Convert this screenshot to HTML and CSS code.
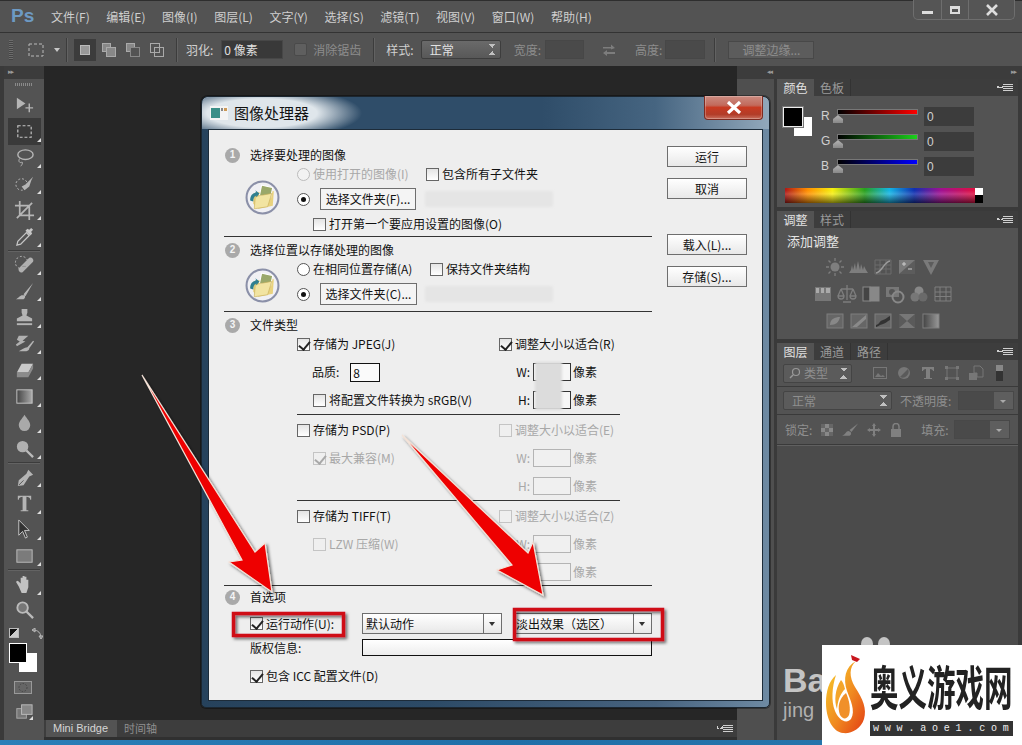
FILE: index.html
```html
<!DOCTYPE html>
<html lang="zh">
<head>
<meta charset="utf-8">
<title>图像处理器</title>
<link rel="stylesheet" href="styles.css">
</head>
<body>
<div class="app">
  <header class="menubar">
    <span class="ps">Ps</span>
    <nav class="menu"><span>文件(F)</span><span>编辑(E)</span><span>图像(I)</span><span>图层(L)</span><span>文字(Y)</span><span>选择(S)</span><span>滤镜(T)</span><span>视图(V)</span><span>窗口(W)</span><span>帮助(H)</span></nav>
    <div class="winbtns">
      <span class="wb wb-min"><i></i></span><span class="wb wb-max"><i></i></span><span class="wb wb-close">
        <svg width="14" height="12" viewBox="0 0 14 12"><path d="M2 1l10 10M12 1L2 11" stroke="#ddd" stroke-width="2.6"/></svg></span>
    </div>
  </header>

  <div class="optbar">
    <span class="grip"></span>
    <svg class="o-marq" width="16" height="14" viewBox="0 0 16 14"><rect x="1" y="1" width="14" height="12" fill="none" stroke="#bbb" stroke-dasharray="3 2"/></svg>
    <span class="o-caret"></span>
    <span class="o-sep s1"></span>
    <span class="o-mode on"><svg width="12" height="12"><rect x="1.5" y="1.5" width="9" height="9" fill="#999" stroke="#bbb"/></svg></span>
    <span class="o-mode"><svg width="14" height="14"><rect x=".5" y=".5" width="8" height="8" fill="#888" stroke="#aaa"/><rect x="4.5" y="4.5" width="9" height="9" fill="#888" stroke="#aaa"/></svg></span>
    <span class="o-mode"><svg width="14" height="14"><rect x=".5" y=".5" width="8" height="8" fill="#888" stroke="#aaa"/><rect x="4.5" y="4.5" width="9" height="9" fill="#535353" stroke="#888"/></svg></span>
    <span class="o-mode"><svg width="14" height="14"><rect x=".5" y=".5" width="9" height="9" fill="none" stroke="#aaa"/><rect x="4.5" y="4.5" width="9" height="9" fill="none" stroke="#aaa"/></svg></span>
    <span class="o-sep s2"></span>
    <span class="o-label l1">羽化:</span>
    <span class="o-input feather">0 像素</span>
    <span class="o-check"></span>
    <span class="o-label dim">消除锯齿</span>
    <span class="o-sep s3"></span>
    <span class="o-label l2">样式:</span>
    <span class="o-select">正常<i class="updown"></i></span>
    <span class="o-label dim l3">宽度:</span>
    <span class="o-input w1"></span>
    <svg class="o-swap" width="14" height="14" viewBox="0 0 14 14"><path d="M1 4h8V1.5L13 5 9 6.5V5.500H1zM13 9H5V7L1 10l4 3v-2h8z" fill="#7d7d7d"/></svg>
    <span class="o-label dim l4">高度:</span>
    <span class="o-input w2"></span>
    <span class="o-sep s4"></span>
    <span class="o-btn">调整边缘...</span>
  </div>

  <main class="work">
    <aside class="toolcol">
      <div class="strip"><span class="arrows">▸▸</span></div>
      <div class="toolgrip"></div>
      <div class="tools">
        <div class="tool nocorner"><svg viewBox="0 0 22 22"><path d="M3 3l9 6-9 6z" fill="#b5b5b5"/><path d="M16 9v9M12 13.500h8" stroke="#b5b5b5" stroke-width="1.500"/></svg></div>
        <div class="tool active"><svg viewBox="0 0 22 22"><rect x="4" y="5" width="14" height="12" fill="none" stroke="#c8c8c8" stroke-width="1.200" stroke-dasharray="3 2"/></svg></div>
        <div class="tool"><svg viewBox="0 0 22 22"><ellipse cx="12" cy="8" rx="8" ry="5" fill="none" stroke="#b5b5b5" stroke-width="1.500"/><path d="M6 12c-2 3 0 5 2 4s0 4-1 4" fill="none" stroke="#b5b5b5"/></svg></div>
        <div class="tool"><svg viewBox="0 0 22 22"><circle cx="8" cy="11" r="6" fill="none" stroke="#bbb" stroke-dasharray="2 2"/><path d="M20 3l-8 8-4 2 3 4 5-4 2-6z" fill="#b5b5b5"/></svg></div>
        <div class="tool"><svg viewBox="0 0 22 22"><path d="M6 1v15h15M1 6h15v15M3 19L19 3" fill="none" stroke="#b5b5b5" stroke-width="1.800"/></svg></div>
        <div class="tool"><svg viewBox="0 0 22 22"><path d="M3 20l1-4 9-9 3 3-9 9z" fill="none" stroke="#c5c5c5" stroke-width="1.300"/><path d="M12 5l5 5 2-2-1-2 2-2-2-2-2 2-2-1z" fill="#c5c5c5"/></svg></div>
        <div class="tool-div"></div>
        <div class="tool"><svg viewBox="0 0 22 22"><circle cx="8" cy="9" r="6.500" fill="none" stroke="#bbb" stroke-dasharray="2 2"/><path d="M5 15L16 4a3 3 0 0 1 4 4L9 19a3 3 0 0 1-4-4z" fill="#b0b0b0"/><path d="M9 13l4 0" stroke="#777" stroke-dasharray="1 1"/></svg></div>
        <div class="tool"><svg viewBox="0 0 22 22"><path d="M20 2L10 14l2 2zM9 15c-3 0-4 3-7 4h8c2-1 2-3 1-4z" fill="#b5b5b5"/></svg></div>
        <div class="tool"><svg viewBox="0 0 22 22"><path d="M8 2h6v4l-1 3 6 3v3H3v-3l6-3-1-3z" fill="#b5b5b5"/><path d="M3 18h16" stroke="#b5b5b5" stroke-width="2"/></svg></div>
        <div class="tool"><svg viewBox="0 0 22 22"><path d="M5 3h10l-6 5 3 1-9 5-1-2 4-3-3-2z" fill="#b0b0b0"/><path d="M20 8l-6 7c-3 0-6 3-9 4h8c3-1 3-2 3-3l5-7z" fill="#b5b5b5"/></svg></div>
        <div class="tool"><svg viewBox="0 0 22 22"><path d="M8 4h12l-5 9H3z" fill="#c9c9c9"/><path d="M3 13h12v5H3zM15 13l5-9v5l-5 9z" fill="#8b8b8b"/></svg></div>
        <div class="tool"><svg viewBox="0 0 22 22"><defs><linearGradient id="gr"><stop offset="0" stop-color="#444"/><stop offset="1" stop-color="#aaa"/></linearGradient></defs><rect x="3" y="4" width="16" height="14" fill="url(#gr)" stroke="#c5c5c5"/></svg></div>
        <div class="tool"><svg viewBox="0 0 22 22"><path d="M11 3c3 5 6 7 6 11a6 6 0 0 1-12 0c0-4 3-6 6-11z" fill="#a9a9a9"/></svg></div>
        <div class="tool"><svg viewBox="0 0 22 22"><circle cx="9" cy="8" r="6" fill="#b0b0b0"/><path d="M13 12l7 7" stroke="#bbb" stroke-width="2.400"/></svg></div>
        <div class="tool-div"></div>
        <div class="tool"><svg viewBox="0 0 22 22"><path d="M15 3l5 5-4 2-6 9-6 1 1-6 8-7z" fill="#b5b5b5"/><path d="M5 19l5-5" stroke="#535353"/></svg></div>
        <div class="tool"><svg viewBox="0 0 22 22"><path d="M4 3h14v4h-1c0-2-2-3-4-3v14h2v1H7v-1h2V4C7 4 5 5 5 7H4z" fill="#b5b5b5"/></svg></div>
        <div class="tool"><svg viewBox="0 0 22 22"><path d="M5 1l11 11h-5l3 7-2 1-3-7-4 4z" fill="#333" stroke="#c5c5c5"/></svg></div>
        <div class="tool"><svg viewBox="0 0 22 22"><rect x="3" y="4" width="16" height="13" fill="#7b7b7b" stroke="#bbb"/></svg></div>
        <div class="tool-div"></div>
        <div class="tool"><svg viewBox="0 0 22 22"><path d="M5 13L2 8l2-1 3 3V4h2v5-7h2v7-6h2v7-4h2v8l-2 6H8z" fill="#c2c2c2"/></svg></div>
        <div class="tool nocorner"><svg viewBox="0 0 22 22"><circle cx="9" cy="8" r="5.500" fill="#777" stroke="#bbb" stroke-width="2"/><path d="M13 12l7 7" stroke="#bbb" stroke-width="2.400"/></svg></div>
      </div>
      <div class="colorctl">
        <div class="ctl-top">
          <span class="mini"></span>
          <svg width="12" height="12" viewBox="0 0 12 12"><path d="M2 2c5 0 8 3 8 8M1 2l3-2v4zM10 11L8 8h4z" fill="none" stroke="#bbb" stroke-width="1"/></svg>
        </div>
        <div class="bigswatch"><span class="fgc"></span><span class="bgc"></span></div>
        <svg class="qmask" width="18" height="13" viewBox="0 0 18 13"><rect x=".5" y=".5" width="17" height="12" fill="#666" stroke="#999"/><circle cx="9" cy="6.500" r="4" fill="none" stroke="#444" stroke-dasharray="1.500 1.500"/></svg>
        <div class="tool screen"><svg viewBox="0 0 22 22"><rect x="4" y="8" width="10" height="10" fill="#777" stroke="#aaa"/><rect x="9" y="4" width="11" height="10" fill="#888" stroke="#bbb"/></svg></div>
      </div>
    </aside>

    <section class="center">
      <div class="canvas"></div>
      <div class="bottom">
        <span class="btab on">Mini Bridge</span><span class="btab">时间轴</span>
        <span class="pmenu bm"></span>
      </div>
    </section>

    <aside class="dock">
      <div class="strip dockstrip"><span class="arrows">◂◂</span><span class="arrows">▸▸</span></div>
      <div class="dockbody">
        <div class="iconcol"></div>
        <div class="panels">
          <section class="panel">
            <div class="tabs"><span class="tab on">颜色</span><span class="tab">色板</span><span class="pmenu"></span></div>
            <div class="pbody color">
              <div class="colortop">
                <div class="swatch"><span class="s-fg"></span><span class="s-bg"></span></div>
                <div class="sliders">
                  <div class="srow"><span class="slabel">R</span><span class="slider red"></span><span class="pinput">0</span></div>
                  <div class="srow"><span class="slabel">G</span><span class="slider green"></span><span class="pinput">0</span></div>
                  <div class="srow"><span class="slabel">B</span><span class="slider blue"></span><span class="pinput">0</span></div>
                </div>
              </div>
              <div class="spectrum"><div class="rainbow"></div><div class="bw"></div></div>
            </div>
          </section>
          <section class="panel">
            <div class="tabs"><span class="tab on">调整</span><span class="tab">样式</span><span class="pmenu"></span></div>
            <div class="pbody adjust">
              <div class="addadj">添加调整</div>
              <div class="adjrow r5">
                <svg viewBox="0 0 20 20"><circle cx="10" cy="10" r="4.500" fill="#7e7e7e"/><path d="M10 1v3M10 16v3M1 10h3M16 10h3M3.500 3.500l2 2M14.500 14.500l2 2M3.500 16.500l2-2M14.500 5.500l2-2" stroke="#7e7e7e" stroke-width="1.300"/></svg>
                <svg viewBox="0 0 20 20"><path d="M0 16l2-3 1-5 1 5 2-7 1 7 2-9 2 9 1-6 2 6 1-4 2 4 2 3z" fill="#7e7e7e"/></svg>
                <svg viewBox="0 0 20 20"><path d="M2 3h16v14H2zM2 8h16M2 12h16M7 3v14M13 3v14" fill="none" stroke="#6c6c6c"/><path d="M3 16C9 15 11 5 17 4" fill="none" stroke="#999" stroke-width="1.500"/></svg>
                <svg viewBox="0 0 20 20"><rect x="2" y="3" width="16" height="14" fill="#7a7a7a"/><path d="M2 17L18 3v14z" fill="#5c5c5c"/><path d="M5 7h4M7 5v4M11 12h4" stroke="#ccc"/></svg>
                <svg viewBox="0 0 20 20"><path d="M2 3h16l-8 15z" fill="#7a7a7a"/><path d="M7 5h6l-3 6z" fill="#5c5c5c"/></svg>
              </div>
              <div class="adjrow r6">
                <svg viewBox="0 0 20 20"><rect x="2" y="3" width="16" height="14" fill="#777"/><path d="M3 4h3v5H3zM8 4h3v5H8zM13 4h4v5h-4z" fill="#aaa"/></svg>
                <svg viewBox="0 0 20 20"><path d="M10 1v15M4 5h12M4 5l-3 7M4 5l3 7M16 5l-3 7M16 5l3 7M1 12a3 3 0 0 0 6 0zM13 12a3 3 0 0 0 6 0zM6 18h8" fill="none" stroke="#7e7e7e" stroke-width="1.300"/></svg>
                <svg viewBox="0 0 20 20"><rect x="2" y="3" width="7" height="14" fill="#444" stroke="#888"/><rect x="9" y="3" width="9" height="14" fill="#888" stroke="#888"/></svg>
                <svg viewBox="0 0 20 20"><rect x="1" y="3" width="13" height="10" fill="#777"/><circle cx="7" cy="8" r="3" fill="#555"/><circle cx="13" cy="13" r="5.500" fill="none" stroke="#888" stroke-width="2"/></svg>
                <svg viewBox="0 0 20 20"><circle cx="10" cy="7" r="4.500" fill="#888"/><circle cx="6" cy="13" r="4.500" fill="#777"/><circle cx="14" cy="13" r="4.500" fill="#6a6a6a"/></svg>
                <svg viewBox="0 0 20 20"><path d="M2 3h16v14H2zM2 8h16M2 12.500h16M7 3v14M13 3v14" fill="none" stroke="#7e7e7e"/></svg>
              </div>
              <div class="adjrow r5">
                <svg viewBox="0 0 20 20"><rect x="2" y="3" width="16" height="14" fill="#666" stroke="#7e7e7e"/><path d="M5 14c0-6 5-8 10-8-1 5-4 8-10 8z" fill="#888"/></svg>
                <svg viewBox="0 0 20 20"><rect x="2" y="3" width="16" height="14" fill="#666" stroke="#7e7e7e"/><path d="M3 16L17 4v4L8 16z" fill="#8a8a8a"/></svg>
                <svg viewBox="0 0 20 20"><rect x="2" y="3" width="16" height="14" fill="#666" stroke="#7e7e7e"/><path d="M3 14c4-1 3-4 7-5s4-3 7-4v4c-3 1-3 3-7 4s-4 2-7 3z" fill="#333"/></svg>
                <svg viewBox="0 0 20 20"><rect x="2" y="3" width="16" height="14" fill="#777"/><path d="M2 3l8 7-8 7zM18 3l-8 7 8 7z" fill="#5a5a5a"/></svg>
                <svg viewBox="0 0 20 20"><defs><linearGradient id="gm"><stop offset="0" stop-color="#444"/><stop offset="1" stop-color="#999"/></linearGradient></defs><rect x="2" y="3" width="16" height="14" fill="url(#gm)" stroke="#7e7e7e"/></svg>
              </div>
            </div>
          </section>
          <section class="panel layers">
            <div class="tabs"><span class="tab on">图层</span><span class="tab">通道</span><span class="tab">路径</span><span class="pmenu"></span></div>
            <div class="pbody lay">
              <div class="lrow l-filter">
                <span class="pselect filter">
                  <svg width="12" height="12" viewBox="0 0 12 12"><circle cx="7" cy="5" r="3.500" fill="none" stroke="#999" stroke-width="1.200"/><path d="M4 8l-3 3" stroke="#999" stroke-width="1.500"/></svg>
                  <span>类型</span><i class="updown"></i>
                </span>
                <div class="licons">
                  <svg viewBox="0 0 16 16"><rect x="1.500" y="2.500" width="13" height="11" fill="none" stroke="#777"/><path d="M3 12l3-4 3 3 2-1 2 2z" fill="#777"/></svg>
                  <svg viewBox="0 0 16 16"><circle cx="8" cy="8" r="6" fill="#777"/><path d="M4 12L12 4a6 6 0 0 1-8 8z" fill="#5a5a5a"/></svg>
                  <svg viewBox="0 0 16 16"><path d="M2 2h12v4h-1c0-1-1-2-3-2v9h2v1H4v-1h2V4C4 4 3 5 3 6H2z" fill="#808080"/></svg>
                  <svg viewBox="0 0 16 16"><rect x="3" y="3" width="10" height="10" fill="none" stroke="#777"/><path d="M1 1h3v3H1zM12 1h3v3h-3zM1 12h3v3H1zM12 12h3v3h-3z" fill="#777"/></svg>
                  <svg viewBox="0 0 16 16"><path d="M6 1h6l3 3v8H9V8H6z" fill="none" stroke="#777"/><rect x="1" y="8" width="8" height="7" fill="#777"/></svg>
                </div>
                <span class="ltoggle"></span>
              </div>
              <div class="lrow l-blend">
                <span class="pselect blend"><span>正常</span><i class="updown"></i></span>
                <span class="dimtxt opac">不透明度:</span>
                <span class="combo"><i></i></span>
              </div>
              <div class="lrow l-lock">
                <span class="dimtxt">锁定:</span>
                <div class="lock-ic">
                  <svg viewBox="0 0 14 14"><path d="M1 1h12v12H1z" fill="#888"/><path d="M1 1h4v4H1zM9 1h4v4H9zM5 5h4v4H5zM1 9h4v4H1zM9 9h4v4H9z" fill="#666"/></svg>
                  <svg viewBox="0 0 18 14"><path d="M17 0L8 7l2 2zM7 8C4 8 4 12 0 13h8c2-1 2-3 1-4z" fill="#808080"/></svg>
                  <svg viewBox="0 0 14 14"><path d="M7 0l2 3H8v3h3V5l3 2-3 2V8H8v3h1l-2 3-2-3h1V8H3v1L0 7l3-2v1h3V3H5z" fill="#808080"/></svg>
                  <svg viewBox="0 0 14 14"><rect x="2" y="6" width="10" height="8" fill="#808080"/><path d="M4 6V3.500a3 3 0 0 1 6 0V6" fill="none" stroke="#808080" stroke-width="1.500"/></svg>
                </div>
                <span class="dimtxt fill">填充:</span>
                <span class="combo"><i></i></span>
              </div>
              <div class="watermark">
                <svg class="paw" width="32" height="12" viewBox="0 0 32 12"><ellipse cx="7" cy="7" rx="6" ry="7" fill="#c4c4c4"/><ellipse cx="24" cy="7" rx="6" ry="7" fill="#c4c4c4"/></svg>
                <span class="ba">Ba</span><span class="jing">jing</span>
              </div>
            </div>
          </section>
        </div>
      </div>
    </aside>
  </main>
  <div class="taskbar"></div>

  <div class="dialog">
    <div class="dtitle">
      <svg class="dicon" width="18" height="14" viewBox="0 0 18 14"><rect width="18" height="14" fill="#f4f4f4"/><rect x="1" y="2" width="9" height="10" fill="#3b8f88"/><rect x="11" y="2" width="2" height="3" fill="#888"/><rect x="14" y="2" width="3" height="3" fill="#c95"/></svg>
      <span class="dname">图像处理器</span>
      <span class="dclose"><svg width="16" height="13" viewBox="0 0 16 13"><path d="M2 1l12 11M14 1L2 12" stroke="#fff" stroke-width="3.200"/></svg></span>
    </div>
    <div class="client">
      <div class="dleft">
        <section class="sec sec1">
          <div class="head"><span class="num">1</span><span>选择要处理的图像</span></div>
          <div class="secbody">
            <div class="foldcol"><svg class="fold" viewBox="0 0 34 34"><circle cx="17" cy="17" r="15.500" fill="#f0f0f4" stroke="#8b90a8" stroke-width="2"/><path d="M8 13l9-2 3-3 8 3-1 14-14 3-5-5z" fill="#e9d27e"/><rect x="15" y="6" width="11" height="10" fill="#9aa86a" stroke="#fff" transform="rotate(12 20 11)"/><path d="M10 16l16-3-4 13-13 2z" fill="#f2e4a2" stroke="#c7ad5a" stroke-width=".6"/><path d="M5 20c0-5 2-7 6-8l-1-2 4 3-3 4v-2c-2 1-3 3-3 6z" fill="#2f7f90"/></svg></div>
            <div class="rows">
              <div class="row r18 split1"><label class="opt off"><i class="radio off"></i>使用打开的图像(I)</label><label class="opt"><i class="check"></i>包含所有子文件夹</label></div>
              <div class="row r32"><i class="radio sel"></i><span class="btn pick p1">选择文件夹(F)...</span><span class="blurred"></span></div>
              <div class="row r18 ind"><label class="opt"><i class="check"></i>打开第一个要应用设置的图像(O)</label></div>
            </div>
          </div>
        </section>
        <section class="sec sec2">
          <div class="head"><span class="num">2</span><span>选择位置以存储处理的图像</span></div>
          <div class="secbody">
            <div class="foldcol"><svg class="fold" viewBox="0 0 34 34"><circle cx="17" cy="17" r="15.500" fill="#f0f0f4" stroke="#8b90a8" stroke-width="2"/><path d="M8 13l9-2 3-3 8 3-1 14-14 3-5-5z" fill="#e9d27e"/><rect x="15" y="6" width="11" height="10" fill="#9aa86a" stroke="#fff" transform="rotate(12 20 11)"/><path d="M10 16l16-3-4 13-13 2z" fill="#f2e4a2" stroke="#c7ad5a" stroke-width=".6"/><path d="M5 20c0-5 2-7 6-8l-1-2 4 3-3 4v-2c-2 1-3 3-3 6z" fill="#2f7f90"/></svg></div>
            <div class="rows">
              <div class="row r18 split2"><label class="opt"><i class="radio"></i>在相同位置存储(A)</label><label class="opt"><i class="check"></i>保持文件夹结构</label></div>
              <div class="row r32"><i class="radio sel"></i><span class="btn pick p2">选择文件夹(C)...</span><span class="blurred b2"></span></div>
            </div>
          </div>
        </section>
        <section class="sec sec3">
          <div class="head h3"><span class="num">3</span><span>文件类型</span></div>
          <div class="fmt">
            <label class="opt"><i class="check on"></i>存储为 JPEG(J)</label>
            <label class="opt"><i class="check on"></i>调整大小以适合(R)</label>
            <div class="indent">品质:<span class="quality">8</span></div>
            <div class="dim"><span class="wl">W:</span><span class="field dark"></span><span>像素</span></div>
            <label class="opt indent"><i class="check"></i>将配置文件转换为 sRGB(V)</label>
            <div class="dim"><span class="wl">H:</span><span class="field dark"></span><span>像素</span></div>
            <span class="bluroverlay"></span>
          </div>
          <div class="fmt">
            <label class="opt"><i class="check"></i>存储为 PSD(P)</label>
            <label class="opt off"><i class="check off"></i>调整大小以适合(E)</label>
            <label class="opt off indent"><i class="check on off"></i>最大兼容(M)</label>
            <div class="dim off"><span class="wl">W:</span><span class="field"></span><span>像素</span></div>
            <span></span>
            <div class="dim off"><span class="wl">H:</span><span class="field"></span><span>像素</span></div>
          </div>
          <div class="fmt last">
            <label class="opt"><i class="check"></i>存储为 TIFF(T)</label>
            <label class="opt off"><i class="check off"></i>调整大小以适合(Z)</label>
            <label class="opt off indent"><i class="check off"></i>LZW 压缩(W)</label>
            <div class="dim off"><span class="wl">W:</span><span class="field"></span><span>像素</span></div>
            <span></span>
            <div class="dim off"><span class="wl">H:</span><span class="field"></span><span>像素</span></div>
          </div>
        </section>
        <section class="sec4">
          <div class="head"><span class="num">4</span><span>首选项</span></div>
          <div class="prefs">
            <label class="opt"><i class="check on"></i>运行动作(U):</label>
            <span class="dropdown"><span>默认动作</span><i></i></span>
            <span class="dropdown second"><span>淡出效果（选区）</span><i></i></span>
            <span>版权信息:</span>
            <span class="copyright"></span>
            <label class="opt full"><i class="check on"></i>包含 ICC 配置文件(D)</label>
          </div>
        </section>
      </div>
      <div class="dright">
        <span class="btn dbtn">运行</span>
        <span class="btn dbtn">取消</span>
        <span class="btn dbtn gap">载入(L)...</span>
        <span class="btn dbtn">存储(S)...</span>
      </div>
    </div>
  </div>

  <svg class="marks" width="1022" height="745" viewBox="0 0 1022 745">
    <defs><filter id="shade" x="-20%" y="-20%" width="140%" height="140%"><feDropShadow dx="2" dy="2" stdDeviation="1.500" flood-color="#000" flood-opacity=".55"/></filter></defs>
    <g filter="url(#shade)" stroke="#f3e3d8" stroke-width="1.200" fill="#ee0000" stroke-linejoin="miter">
      <path d="M142 375L242 560L229 562L272 592L265 543L255 552Z"/>
      <path d="M402 435L512 565L497 570L543 595L533 542L528 553Z"/>
    </g>
    <g filter="url(#shade)" fill="none" stroke="#cf1018" stroke-width="3.500">
      <rect x="233.500" y="613.500" width="110" height="22"/>
      <rect x="514.500" y="609.500" width="148" height="30"/>
    </g>
  </svg>

  <div class="logo">
    <svg class="phoenix" width="42" height="82" viewBox="0 0 42 82">
      <defs><linearGradient id="ph" x1="0" y1="0" x2="1" y2="1"><stop offset="0" stop-color="#f7d02c"/><stop offset=".55" stop-color="#f08a20"/><stop offset="1" stop-color="#e23c14"/></linearGradient></defs>
      <path d="M26 2l9 4-3 3-5-2z" fill="#c8161d"/>
      <path d="M31 8C24 14 24 24 30 34C38 46 42 56 39 66C36 76 26 81 18 80C8 79 1 66 1 50C1 38 4 28 11 22C7 34 6 48 10 58C13 66 21 72 26 66C31 58 25 46 22 38C18 26 20 14 31 8Z" fill="url(#ph)"/>
      <path d="M16 27C10 36 9 48 12 56C13 46 16 40 20 36C19 32 18 29 16 27Z" fill="#f4a52a"/>
      <path d="M21 40C14 46 12 54 15 62C18 67 22 66 24 62C26 56 24 46 21 40Z" fill="#f0902a"/>
    </svg>
    <div class="logotext">
      <div class="lname"><span>奥义游戏网</span></div>
      <div class="lurl">www.aoe1.com</div>
    </div>
  </div>
</div>
</body>
</html>
```
FILE: styles.css
```css
* { box-sizing: border-box; }
html, body { margin: 0; padding: 0; background: #3a3a3a; }
body { font: 12px/1 "Noto Sans CJK SC", "Liberation Sans", sans-serif; color: #111; }
i { display: block; font-style: normal; }

.app { position: relative; width: 1022px; height: 745px; overflow: hidden; display: flex; flex-direction: column; background: #535353; }

/* menu */
.menubar { height: 33px; flex: none; display: flex; align-items: flex-start; background: #535353; border-top: 1px solid #2e2e2e; border-bottom: 1px solid #333; }
.ps { width: 51px; padding: 4px 0 0 11px; font: bold 19px/22px "Liberation Sans", sans-serif; color: #6d9ac4; }
.menu { display: flex; gap: 16.55px; padding-top: 10px; color: #cfcfcf; }
.winbtns { margin-left: auto; margin-right: 7px; margin-top: -1px; height: 20px; width: 102px; display: flex; border: 1px solid #6e6e6e; border-top: 0; border-radius: 0 0 5px 5px; background: #555; }
.wb { display: flex; align-items: center; justify-content: center; border-right: 1px solid #6e6e6e; }
.wb-min { width: 28px; } .wb-max { width: 27px; } .wb-close { flex: 1; border: 0; }
.wb-min i { width: 11px; height: 3px; margin-top: 5px; background: #ddd; }
.wb-max i { width: 10px; height: 8px; border: 2px solid #ddd; border-top-width: 3px; }

/* options */
.optbar { height: 33px; flex: none; display: flex; align-items: center; background: #535353; color: #d0d0d0; }
.grip { width: 4px; height: 20px; margin-left: 9px; background: repeating-linear-gradient(#6c6c6c 0 1px, #444 1px 2px); }
.o-marq { margin-left: 15px; }
.o-caret { margin-left: 10px; border: 3px solid transparent; border-top: 4px solid #c8c8c8; border-bottom: 0; }
.o-sep { width: 1px; height: 24px; background: #3c3c3c; box-shadow: 1px 0 #626262; }
.s1 { margin-left: 6px; } .s2 { margin-left: 8px; } .s3 { margin-left: 12px; } .s4 { margin-left: 9px; }
.o-mode { width: 22px; height: 22px; margin-left: 2px; display: flex; align-items: center; justify-content: center; }
.s1 + .o-mode { margin-left: 7px; }
.o-mode.on { background: #3c3c3c; }
.o-label { white-space: nowrap; }
.l1 { margin-left: 9px; } .l2 { margin-left: 12px; } .l3 { margin-left: 13px; } .l4 { margin-left: 19px; }
.dim.o-label { color: #8d8d8d; }
.o-input { height: 19px; background: #3d3d3d; border: 1px solid #474747; display: flex; align-items: center; padding-left: 2px; }
.feather { width: 62px; margin-left: 8px; background: #393939; color: #e0e0e0; }
.w1 { width: 39px; margin-left: 4px; background: #4a4a4a; }
.w2 { width: 40px; margin-left: 3px; background: #4a4a4a; }
.o-swap { margin-left: 18px; }
.o-check { width: 13px; height: 13px; margin: 0 6px 0 11px; background: #5f5f5f; border: 1px solid #4a4a4a; border-radius: 2px; }
.o-select { width: 80px; height: 19px; margin-left: 7px; padding-left: 8px; display: flex; align-items: center; justify-content: space-between; background: linear-gradient(#6a6a6a, #585858); border: 1px solid #3d3d3d; border-radius: 2px; color: #e2e2e2; }
.updown { position: relative; width: 7px; height: 11px; margin-right: 4px; background:
  linear-gradient(to top right, transparent 50%, #c0c0c0 50%) 0 0/4px 4px no-repeat,
  linear-gradient(to top left, transparent 50%, #c0c0c0 50%) 3.500px 0/3.500px 4px no-repeat,
  linear-gradient(to bottom right, transparent 50%, #c0c0c0 50%) 0 7px/4px 4px no-repeat,
  linear-gradient(to bottom left, transparent 50%, #c0c0c0 50%) 3.500px 7px/3.500px 4px no-repeat; }
.o-btn { width: 86px; height: 18px; margin-left: 13px; display: flex; align-items: center; justify-content: center; background: #5c5c5c; border: 1px solid #484848; color: #8d8d8d; }

/* work area */
.work { flex: 1; min-height: 0; display: flex; }
.strip { height: 13px; background: #3c3c3c; color: #9a9a9a; display: flex; align-items: center; padding-left: 3px; }
.arrows { font: 7px/1 "DejaVu Sans", sans-serif; letter-spacing: -1px; }
.toolcol { width: 44px; flex: none; border-left: 4px solid #3a3a3a; background: #535353; }
.toolcol .strip { background: #3c3c3c; padding-left: 4px; }
.toolgrip { height: 13px; display: flex; }
.toolgrip::before { content: ""; width: 18px; height: 3px; margin: 4px auto; background: repeating-linear-gradient(90deg, #8a8a8a 0 1px, #535353 1px 2px); }
.tools { display: flex; flex-direction: column; }
.tool { position: relative; height: 26.3px; display: flex; align-items: center; justify-content: center; }
.tool svg { width: 21px; height: 21px; }
.tool::after { content: ""; position: absolute; right: 3px; bottom: 3px; border: 2px solid transparent; border-right-color: #ddd; border-bottom-color: #ddd; }
.tool.nocorner::after { display: none; }
.tool.active { background: #3a3a3a; margin: 0 3px 0 4px; height: 26.3px; }
.tool.active::after { right: 0; }
.tool-div { height: 2px; margin: 0 4px; background: #3c3c3c; border-bottom: 1px solid #636363; }
.colorctl { position: relative; padding: 4px 0 0 5px; }
.ctl-top { height: 12px; display: flex; gap: 12px; }
.mini { width: 10px; height: 10px; background: linear-gradient(135deg, #111 50%, #ccc 50%); border: 1px solid #bbb; }
.bigswatch { display: grid; grid-template: 10px 10px 9px / 10px 8px 10px; margin-top: 3px; }
.fgc { grid-area: 1/1/3/3; background: #000; border: 1px solid #fff; z-index: 1; }
.bgc { grid-area: 2/2/4/4; background: #fff; }
.qmask { display: block; margin: 9px 0 0 5px; }
.screen { margin: 7px 0 0 2px; width: 25px; height: 22px; }

.center { flex: 1; min-width: 0; display: flex; flex-direction: column; }
.canvas { flex: 1; background: #262626; }
.bottom { height: 20px; display: flex; align-items: flex-start; background: #3d3d3d; border-bottom: 3px solid #303030; padding-left: 2px; position: relative; }
.btab { height: 17px; padding: 0 7px; display: flex; align-items: center; white-space: nowrap; color: #8f8f8f; font-size: 11px; }
.btab.on { background: #535353; color: #d6d6d6; width: 71px; font-family: "Liberation Sans", sans-serif; }
.pmenu { margin-left: auto; margin-right: 5px; margin-top: 5px; width: 16px; height: 8px; background:
  repeating-linear-gradient(#cfcfcf 0 1px, transparent 1px 2px) right 0/10px 8px no-repeat,
  linear-gradient(to bottom left, transparent 50%, #cfcfcf 50%) 0 1px/3px 3px no-repeat,
  linear-gradient(to bottom right, transparent 50%, #cfcfcf 50%) 3px 1px/3px 3px no-repeat; transform: none; }
.bm { margin-right: 4px; }

.dock { width: 285px; flex: none; display: flex; flex-direction: column; background: #3a3a3a; }
.dockstrip { justify-content: space-between; padding: 0 6px 0 30px; }
.dockbody { flex: 1; min-height: 0; display: flex; }
.iconcol { width: 38px; background: #4f4f4f; border-right: 1px solid #3a3a3a; }
.panels { width: 241px; margin-left: 2px; display: flex; flex-direction: column; gap: 4px; }
.panel { background: #535353; }
.tabs { height: 17px; display: flex; background: #3d3d3d; }
.tab { width: 37px; display: flex; align-items: center; justify-content: center; color: #9a9a9a; border-right: 1px solid #333; font-size: 12px; }
.tab.on { background: #535353; color: #e2e2e2; border: 0; }
.pbody { height: 111px; }

.colortop { display: flex; padding: 11px 0 0 6px; }
.swatch { position: relative; width: 29px; height: 29px; }
.s-fg { position: absolute; left: 0; top: 0; width: 20px; height: 20px; background: #000; border: 1px solid #ededed; outline: 1px solid #777; z-index: 1; }
.s-bg { position: absolute; right: 0; bottom: 0; width: 18px; height: 19px; background: #fff; }
.sliders { margin-left: 9px; display: flex; flex-direction: column; gap: 6px; }
.srow { display: flex; height: 19px; }
.slabel { width: 16px; padding-top: 2px; color: #d0d0d0; font: 12px/14px "Liberation Sans", sans-serif; }
.slider { position: relative; width: 81px; height: 6px; margin-top: 2px; border: 1px solid #777; }
.slider::after { content: ""; position: absolute; left: -5px; top: 5px; width: 10px; height: 8px; background: linear-gradient(#b5b5b5, #888); clip-path: polygon(50% 0, 100% 50%, 100% 100%, 0 100%, 0 50%); }
.red { background: linear-gradient(90deg, #000, #f00); }
.green { background: linear-gradient(90deg, #000, #1bd11b); }
.blue { background: linear-gradient(90deg, #000, #00f); }
.pinput { width: 50px; height: 19px; margin-left: 6px; padding: 4px 0 0 3px; background: #3c3c3c; color: #d0d0d0; font: 12px/1 "Liberation Sans", sans-serif; }
.spectrum { display: flex; width: 198px; height: 15px; margin: 12px 0 0 8px; }
.rainbow { flex: 1; background:
  linear-gradient(transparent 15%, rgba(255,255,255,.15) 40%, rgba(0,0,0,.55) 100%),
  linear-gradient(90deg, #b01818, #ff9000 12%, #f5ee10 25%, #28a020 42%, #14b4e4 55%, #1030b0 68%, #a01090 82%, #e01040 100%); }
.bw { width: 8px; background: linear-gradient(#fff 50%, #000 50%); }

.adjust { padding-top: 6px; }
.addadj { height: 14px; margin: 0 0 5px 10px; color: #e4e4e4; font-size: 13px; line-height: 14px; }
.adjrow { height: 27px; display: flex; align-items: center; gap: 4px; }
.adjrow svg { width: 20px; height: 20px; flex: none; }
.r5 { margin-left: 48px; }
.r6 { margin-left: 36px; }

.layers { flex: 1; min-height: 0; background: #4b4b4b; }
.lay { height: auto; position: relative; }
.lrow { display: flex; align-items: center; background: #535353; border-bottom: 1px solid #3a3a3a; box-shadow: 0 1px #606060; }
.l-filter { height: 27px; padding-left: 6px; }
.l-blend { height: 28px; padding-left: 6px; }
.l-lock { height: 30px; padding-left: 8px; }
.pselect { height: 19px; display: flex; align-items: center; justify-content: space-between; padding-left: 5px; background: #5b5b5b; border: 1px solid #444; border-radius: 2px; color: #8f8f8f; }
.pselect > span { flex: 1; padding-left: 3px; }
.filter { width: 69px; }
.blend { width: 109px; }
.licons { display: flex; gap: 8px; margin-left: 20px; }
.licons svg { width: 16px; height: 16px; }
.ltoggle { width: 7px; height: 16px; margin-left: 12px; background: linear-gradient(#888 40%, #333 40%); }
.dimtxt { color: #8f8f8f; white-space: nowrap; }
.opac { margin-left: 8px; width: 58px; }
.fill { margin-left: 8px; width: 33px; }
.combo { display: flex; width: 56px; height: 19px; justify-content: flex-end; background: #4a4a4a; border: 1px solid #484848; }
.combo i { width: 19px; background: #5e5e5e; position: relative; }
.combo i::after { content: ""; position: absolute; left: 6px; top: 8px; border: 3px solid transparent; border-top: 3px solid #aaa; border-bottom: 0; }
.lock-ic { display: flex; gap: 8px; margin-left: 8px; align-items: center; width: 93px; }
.lock-ic svg { width: 14px; height: 14px; }
.lock-ic svg:nth-child(2) { width: 17px; }
.watermark { position: relative; display: flex; flex-direction: column; padding: 220px 0 0 6px; color: #c4c4c4; }
.paw { position: absolute; left: 83px; top: 192px; }
.ba { font: bold 34px/30px "Liberation Sans", sans-serif; }
.jing { margin-top: 5px; font: 20px/20px "Liberation Sans", sans-serif; color: #b0b0b0; }

.taskbar { height: 5px; flex: none; background: linear-gradient(90deg, #2b7fb8, #1f6fa8 50%, #2a78ad); }

/* dialog */
.dialog { position: absolute; left: 201px; top: 96px; width: 569px; height: 612px; padding: 0 6px 6px; border-radius: 7px 7px 5px 5px; border: 1px solid #1b2630;
  background: linear-gradient(90deg, #26425c 0, #2c4a66 40%, #47637f 80%, #6e8aa3 100%);
  box-shadow: 0 0 0 1px rgba(0,0,0,.35), inset 0 1px #c4d2dd; display: flex; flex-direction: column; }
.dtitle { height: 32px; flex: none; position: relative; display: flex; align-items: center; margin: 0 -6px; padding: 0 0 0 8px;
  border-radius: 7px 7px 0 0;
  background: radial-gradient(ellipse 100px 26px at 60px 16px, #dfe6eb 55%, rgba(223,230,235,0) 100%), linear-gradient(90deg, #2f4d69 0, #2f4d69 60%, #466581 80%, #92a8bb 100%); }
.dname { margin-left: 6px; font-size: 15px; line-height: 20px; color: #111; }
.dicon { flex: none; }
.dclose { position: absolute; right: 6px; top: -1px; width: 59px; height: 24px; display: flex; align-items: center; justify-content: center; border: 1px solid #7e2a20; border-top: 0; border-radius: 0 0 4px 4px; box-shadow: inset 0 0 0 1px rgba(255,255,255,.25); background: linear-gradient(#cb8b80 0, #c26a5c 40%, #c83a22 50%, #b23c28 80%, #c9705f 100%); }

.client { flex: 1; min-height: 0; display: flex; background: #eeeeee; padding: 15px 0 0 15px; border: 1px solid #1d2c3a; margin-top: 0; font-size: 12px; }
.dleft { width: 428px; flex: none; }
.dright { margin: 1px 0 0 15px; width: 80px; display: flex; flex-direction: column; gap: 11px; }
.btn { display: flex; align-items: center; justify-content: center; background: linear-gradient(#fff, #e8e8e8); border: 1px solid #6e6e6e; color: #111; }
.dbtn { height: 21px; font-size: 12px; }
.gap { margin-top: 24px; }

.sec { border-bottom: 1px solid #333; }
.sec1 { height: 92px; }
.sec2 { height: 75px; padding-top: 3px; }
.sec3 { height: 274px; padding-top: 3px; }
.head { display: flex; align-items: center; gap: 10px; height: 20px; }
.h3 { margin-bottom: -5px; }
.num { width: 15px; height: 15px; margin-left: 1px; flex: none; display: flex; align-items: center; justify-content: center; border-radius: 50%; background: #a9a9a9; color: #f4f4f4; font: bold 10px/1 "Liberation Sans", sans-serif; }
.secbody { display: flex; }
.foldcol { width: 73px; flex: none; display: flex; align-items: center; padding-left: 21px; }
.fold { width: 35px; height: 35px; }
.sec1 .fold { margin-bottom: 4px; }
.rows { flex: 1; display: flex; flex-direction: column; }
.row { display: flex; align-items: center; }
.r18 { height: 18px; }
.r32 { height: 32px; }
.ind { padding-left: 16px; }
.split1 label:first-child { width: 129px; }
.split2 label:first-child { width: 133px; }
.opt { display: flex; align-items: center; gap: 3px; white-space: nowrap; color: #111; }
.opt.off, .off { color: #a8a8a8; }
.radio { width: 13px; height: 13px; flex: none; border-radius: 50%; border: 1px solid #555; background: #fff; position: relative; }
.radio.off { border-color: #bbb; background: #f2f2f2; }
.radio.sel::after { content: ""; position: absolute; left: 3px; top: 3px; width: 5px; height: 5px; border-radius: 50%; background: #111; }
.check { width: 13px; height: 13px; flex: none; border: 1px solid #666; background: linear-gradient(#e4e4e4, #fff); position: relative; }
.check.off { border-color: #c4c4c4; background: #efefef; }
.check.on::after { content: ""; position: absolute; left: 3px; top: 0; width: 5px; height: 9px; border: solid #222; border-width: 0 2px 2px 0; transform: rotate(40deg); }
.check.on.off::after { border-color: #a8a8a8; }
.pick { height: 22px; margin-left: 10px; background: #f4f4f4; }
.p1 { width: 96px; } .p2 { width: 97px; }
.blurred { width: 128px; height: 16px; margin-left: 9px; background: #e5e5e5; border-radius: 2px; filter: blur(1px); }
.b2 { margin-left: 8px; }

.fmt { position: relative; margin-left: 73px; width: 323px; display: grid; grid-template-columns: 202px 121px; grid-auto-rows: 28px; align-items: center; border-bottom: 1px solid #333; margin-bottom: 1px; }
.fmt.last { border: 0; }
.indent { padding-left: 16px; }
div.indent { padding-left: 15px; display: flex; align-items: center; }
.quality { width: 30px; height: 19px; margin-left: 11px; padding: 3px 0 0 2px; border: 1px solid #111; background: #fafafa; }
.dim { display: flex; align-items: center; }
.wl { width: 31px; text-align: right; }
.field { width: 38px; height: 18px; margin: 0 2px 0 3px; border: 1px solid #b4b4b4; background: #f0f0f0; }
.field.dark { border-color: #333; background: #f6f6f6; }
.bluroverlay { position: absolute; left: 238px; top: 32px; width: 27px; height: 48px; background: #dcdcdc; filter: blur(1px); }

.sec4 { padding-top: 1px; }
.prefs { margin: 6px 0 0 26px; display: grid; grid-template-columns: 112px 140px 150px; grid-template-rows: 21px 17px 18px; row-gap: 5px; align-items: center; }
.prefs .copyright { grid-column: 2 / 4; height: 17px; background: linear-gradient(#fff, #ededed); border: 1px solid #111; }
.prefs .full { grid-column: 1 / 4; margin-top: 12px; }
.dropdown { height: 21px; display: flex; align-items: center; justify-content: space-between; padding-left: 3px; background: linear-gradient(#fff, #e8e8e8); border: 1px solid #6e6e6e; }
.dropdown.second { margin-left: 12px; padding-left: 1px; }
.dropdown i { width: 18px; height: 100%; border-left: 1px solid #6e6e6e; position: relative; }
.dropdown i::after { content: ""; position: absolute; left: 5px; top: 8px; border: 3px solid transparent; border-top: 4px solid #333; border-bottom: 0; }

.marks { position: absolute; left: 0; top: 0; pointer-events: none; }

.logo { position: absolute; right: 0; top: 645px; width: 200px; height: 100px; display: flex; background: #fff; padding: 8px 0 0 3px; gap: 3px; }
.phoenix { flex: none; }
.logotext { width: 143px; padding-top: 7px; }
.lname { height: 50px; overflow: visible; }
.lname span { display: block; font: 700 28.500px/29px "Noto Sans CJK SC", sans-serif; color: #222; white-space: nowrap; transform: scaleY(1.650); transform-origin: 0 0; }
.lurl { margin-top: 11px; height: 15px; background: #333; color: #eee; font: 10px/15px "Liberation Mono", monospace; letter-spacing: 5.8px; white-space: nowrap; padding-left: 3px; overflow: visible; }
```
